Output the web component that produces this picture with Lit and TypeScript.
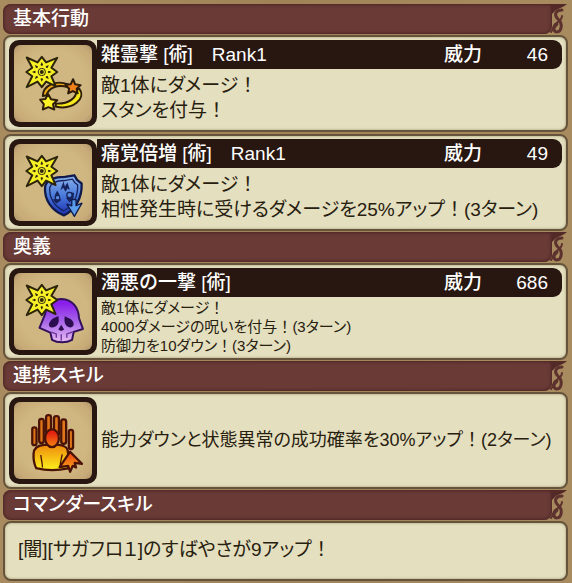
import { LitElement, html, css, svg } from "lit";
import { customElement, property } from "lit/decorators.js";

type Icon = "stun" | "shield" | "skull" | "aura";

const slots = [0, 45, 90, 135, 180, 225, 270, 315];
const burst = svg`<g stroke="#2d240c" stroke-linejoin="round">
  <path fill="#f6f024" stroke-width="6" d="M64 65 L97 80 L110 63 L123 80 L157 66 L139 96 L157 109 L139 122 L152 152 L123 138 L110 155 L97 138 L64 155 L81 122 L63 109 L81 96 Z"/>
  ${slots.map((a) => svg`<path fill="#2d240c" stroke="none" transform="rotate(${a} 110 109)" d="M110 79 L114 88 L110 91 L106 88 Z"/>`)}
  <circle cx="110" cy="109" r="11" fill="#f5f131" stroke-width="3"/>
  <circle cx="110" cy="109" r="6" fill="#2d240c" stroke="none"/>
</g>`;

const art = {
  stun: svg`
    <path fill="#e8a515" stroke="#2d1c08" stroke-width="6" stroke-linejoin="round" d="M113 182 C114 150 153 132 190 147 L188 155 C157 145 130 159 124 180 Z"/>
    <path fill="#f7e81c" stroke="#2d1c08" stroke-width="6" stroke-linejoin="round" d="M224 160 C246 190 204 226 152 214 L153 205 C192 207 218 187 214 164 Z"/>
    ${burst}
    <path fill="#ef811a" stroke="#2d1c08" stroke-width="6" stroke-linejoin="round" d="M205 131 L211 146 L228 149 L216 160 L219 174 L204 167 L190 174 L193 160 L182 148 L198 146 Z"/>
    <path fill="#fff226" stroke="#2d1c08" stroke-width="6" stroke-linejoin="round" d="M129 176 L138 192 L157 195 L144 207 L148 223 L130 216 L113 223 L116 207 L105 193 L121 191 Z"/>`,
  shield: svg`
    <path fill="url(#blue)" stroke="#101a4b" stroke-width="7" stroke-linejoin="round" d="M120 156 C124 136 150 127 180 127 L209 122 L217 136 L231 147 C233 190 212 228 177 244 C142 230 116 198 120 156 Z"/>
    <path fill="none" stroke="#16235d" stroke-width="4" d="M134 160 C138 144 158 138 178 138 L203 134 L210 144 L219 152 C220 188 204 215 177 230 C148 217 132 190 134 160 Z"/>
    <path fill="#16235d" d="M166 168 L176 140 L180 156 L188 144 L195 166 L188 162 L182 172 L175 160 Z M157 168 C151 180 147 184 150 194 L143 196 L154 208 L168 199 L165 184 Z M192 172 L208 176 L206 194 L194 204 L184 192 L190 186 Z"/>
    <circle cx="158" cy="190" r="5" fill="#5c8fe2"/>
    <circle cx="194" cy="182" r="8" fill="#5c8fe2" stroke="#16235d" stroke-width="4"/>
    ${burst}
    <path fill="#5a9bea" stroke="#101a4b" stroke-width="4" stroke-linejoin="round" d="M201 196 H214 V214 L232 207 L209 247 L186 210 L201 215 Z"/>`,
  skull: svg`
    <path fill="url(#purple)" stroke="#32105b" stroke-width="6" stroke-linejoin="round" d="M120 152 C124 122 146 106 170 106 C204 107 222 134 223 164 L235 197 L207 206 L202 230 C184 240 158 240 141 230 L136 208 L103 194 Z"/>
    <path fill="#2b0d50" d="M160 158 C165 178 158 192 140 193 C130 190 129 182 137 172 C144 163 152 163 160 158 Z M180 158 C188 164 198 164 204 174 C210 184 206 192 196 193 C182 191 176 178 180 158 Z M169 184 L178 199 L169 203 L160 199 Z"/>
    <path fill="none" stroke="#67349a" stroke-width="4" d="M139 207 L154 212 V224 M169 213 V233 M204 206 L186 212 V224"/>
    ${burst}`,
  aura: svg`
    <g fill="#e0761a" stroke="#4b1306" stroke-width="7" stroke-linejoin="round">
      <rect x="81" y="104" width="13" height="54" rx="6"/>
      <rect x="102" y="78" width="14" height="74" rx="7"/>
      <rect x="123" y="67" width="15" height="56" rx="7"/>
      <rect x="147" y="70" width="15" height="60" rx="7"/>
      <rect x="169" y="80" width="15" height="74" rx="7"/>
      <rect x="192" y="112" width="13" height="58" rx="6"/>
    </g>
    <path fill="url(#fire)" stroke="#4b1306" stroke-width="7" stroke-linejoin="round" d="M118 157 H162 C182 159 190 166 190 184 V229 C160 235 120 235 93 228 C86 214 84 200 85 184 C86 166 98 158 118 157 Z"/>
    <path fill="none" stroke="#4b1306" stroke-width="4" d="M107 188 C108 202 112 212 112 226 M172 186 C170 198 166 208 166 222"/>
    <ellipse cx="141" cy="137" rx="21" ry="27" fill="url(#head)" stroke="#4b1306" stroke-width="7"/>
    <path fill="url(#arrow)" stroke="#4b1306" stroke-width="7" stroke-linejoin="round" d="M196 178 L232 215 L210 212 L214 226 L204 221 L196 239 L190 221 L164 225 Z"/>`,
};

@customElement("skill-icon")
class SkillIcon extends LitElement {
  @property() name: Icon = "stun";
  static styles = css`
    :host { display: block; flex: none; box-sizing: border-box; width: 88px; height: 87px; border: 5px solid #281711; border-radius: 10px; background: #281711; }
    .art { display: block; width: 100%; height: 100%; border-radius: 6px; background: radial-gradient(#d0b781 60%, #c8ab78 85%, #b0946a); }
  `;
  render() {
    return html`<svg class="art" viewBox="27 27 234 234" aria-hidden="true">
      <defs>
        <linearGradient id="blue" x1="0" y1="0" x2="0" y2="1"><stop offset="0" stop-color="#8db4ec"/><stop offset="0.5" stop-color="#4a7ada"/><stop offset="1" stop-color="#1c2fb4"/></linearGradient>
        <linearGradient id="purple" x1="0" y1="0" x2="0" y2="1"><stop offset="0.1" stop-color="#8a1eea"/><stop offset="0.5" stop-color="#a562e8"/><stop offset="1" stop-color="#e8bcf4"/></linearGradient>
        <linearGradient id="fire" x1="0" y1="0" x2="0" y2="1"><stop offset="0" stop-color="#f08a0e"/><stop offset="1" stop-color="#fcf11c"/></linearGradient>
        <linearGradient id="head" x1="0" y1="0" x2="0" y2="1"><stop offset="0.2" stop-color="#e52210"/><stop offset="1" stop-color="#f58613"/></linearGradient>
        <linearGradient id="arrow" x1="0" y1="0" x2="0" y2="1"><stop offset="0" stop-color="#ea3c10"/><stop offset="1" stop-color="#fbb41b"/></linearGradient>
      </defs>${art[this.name]}</svg>`;
  }
}

@customElement("section-heading")
class SectionHeading extends LitElement {
  static styles = css`
    :host { display: flex; height: 30px; margin-bottom: 1px; }
    .bar { flex: 1; margin: 0; padding-left: 10px; font-size: 19px; line-height: 30px; font-weight: 500; color: #fff; background: #693a36; border-radius: 8px 0 8px 8px; box-shadow: inset 0 0 3px 1px #4c2523; }
    .curl { flex: none; width: 20px; height: 30px; margin-left: -4px; }
  `;
  render() {
    return html`<h2 class="bar"><slot></slot></h2>
      <svg class="curl" viewBox="0 0 20 30" aria-hidden="true">
        <path fill="#532a28" d="M0 0 H19 C16 3 11 4 8 6 L4 10 V1 Z"/>
        <path fill="none" stroke="#5d322e" stroke-width="3" stroke-linecap="round" d="M14 6 C8 6 6 10 9 14 C12 17 14 19 13 24 C12 29 6 29 6 25 C6 22 8 22 9 20"/>
        <path fill="none" stroke="#5d322e" stroke-width="2" stroke-linecap="round" d="M14 12 C14 16 10 18 7 20 C5 22 5 26 3 28"/>
      </svg>`;
  }
}

interface Skill { icon: Icon; title?: string; power?: number; lines: string[]; size?: "small" | "medium"; }

const basic: Skill[] = [
  { icon: "stun", title: "雑霊撃 [術]　Rank1", power: 46, lines: ["敵1体にダメージ！", "スタンを付与！"] },
  { icon: "shield", title: "痛覚倍増 [術]　Rank1", power: 49, lines: ["敵1体にダメージ！", "相性発生時に受けるダメージを25%アップ！(3ターン)"] },
];
const special: Skill = { icon: "skull", title: "濁悪の一撃 [術]", power: 686, lines: ["敵1体にダメージ！", "4000ダメージの呪いを付与！(3ターン)", "防御力を10ダウン！(3ターン)"], size: "small" };
const linked: Skill = { icon: "aura", lines: ["能力ダウンと状態異常の成功確率を30%アップ！(2ターン)"], size: "medium" };

@customElement("app-root")
class AppRoot extends LitElement {
  static styles = css`
    :host { display: block; box-sizing: border-box; min-height: 100vh; padding: 4px 4px 2px 3px; background: linear-gradient(90deg, #a88c60, #a08458 50%, #a88c5f); font-family: "Liberation Sans", "Noto Sans CJK JP", sans-serif; font-feature-settings: "palt"; color: #28200f; }
    .group { display: flex; flex-direction: column; margin-bottom: 1px; }
    .panels { display: flex; flex-direction: column; gap: 2px; }
    .panel { box-sizing: border-box; display: flex; gap: 4px; min-height: 97px; padding: 3px 4px; border: 2px solid #65533b; border-radius: 8px; background: #e3dfbf; box-shadow: inset 0 0 2px 1px #c5bd98; }
    .body { flex: 1; min-width: 0; }
    .center { align-self: center; }
    .title { display: flex; align-items: center; height: 29px; margin-left: -4px; padding: 0 14px 0 4px; border-radius: 0 9px 9px 0; background: #281711; color: #fff; font-size: 19px; line-height: 29px; font-weight: 500; font-feature-settings: normal; }
    .name { flex: 1; margin: 0; font-size: 19px; font-weight: 500; }
    .value { width: 66px; text-align: right; }
    .title + .lines { padding-top: 4px; }
    .title + .lines.small { padding-top: 1px; }
    .lines { font-size: 19px; line-height: 25px; }
    .lines.medium { font-size: 18px; }
    .lines.small { font-size: 15px; line-height: 19px; }
    .line { margin: 0; }
    .full { font-feature-settings: normal; }
    .commander { align-items: center; min-height: 60px; padding: 0 13px 4px; }
  `;
  text(s: string) {
    return s.split(/(！)/).map((p) => (p === "！" ? html`<span class="full">！</span>` : p));
  }
  panel(s: Skill) {
    return html`<article class="panel">
      <skill-icon name=${s.icon}></skill-icon>
      <div class="body ${s.title ? "" : "center"}">
        ${s.title ? html`<div class="title"><h3 class="name">${s.title}</h3><span>威力</span><span class="value">${s.power}</span></div>` : ""}
        <div class="lines ${s.size ?? ""}">${s.lines.map((l) => html`<p class="line">${this.text(l)}</p>`)}</div>
      </div>
    </article>`;
  }
  render() {
    return html`
      <section class="group"><section-heading>基本行動</section-heading><div class="panels">${basic.map((s) => this.panel(s))}</div></section>
      <section class="group"><section-heading>奥義</section-heading>${this.panel(special)}</section>
      <section class="group"><section-heading>連携スキル</section-heading>${this.panel(linked)}</section>
      <section class="group"><section-heading>コマンダースキル</section-heading>
        <article class="panel commander"><div class="lines"><p class="line">${this.text("[闇][サガフロ１]のすばやさが9アップ！")}</p></div></article></section>`;
  }
}
